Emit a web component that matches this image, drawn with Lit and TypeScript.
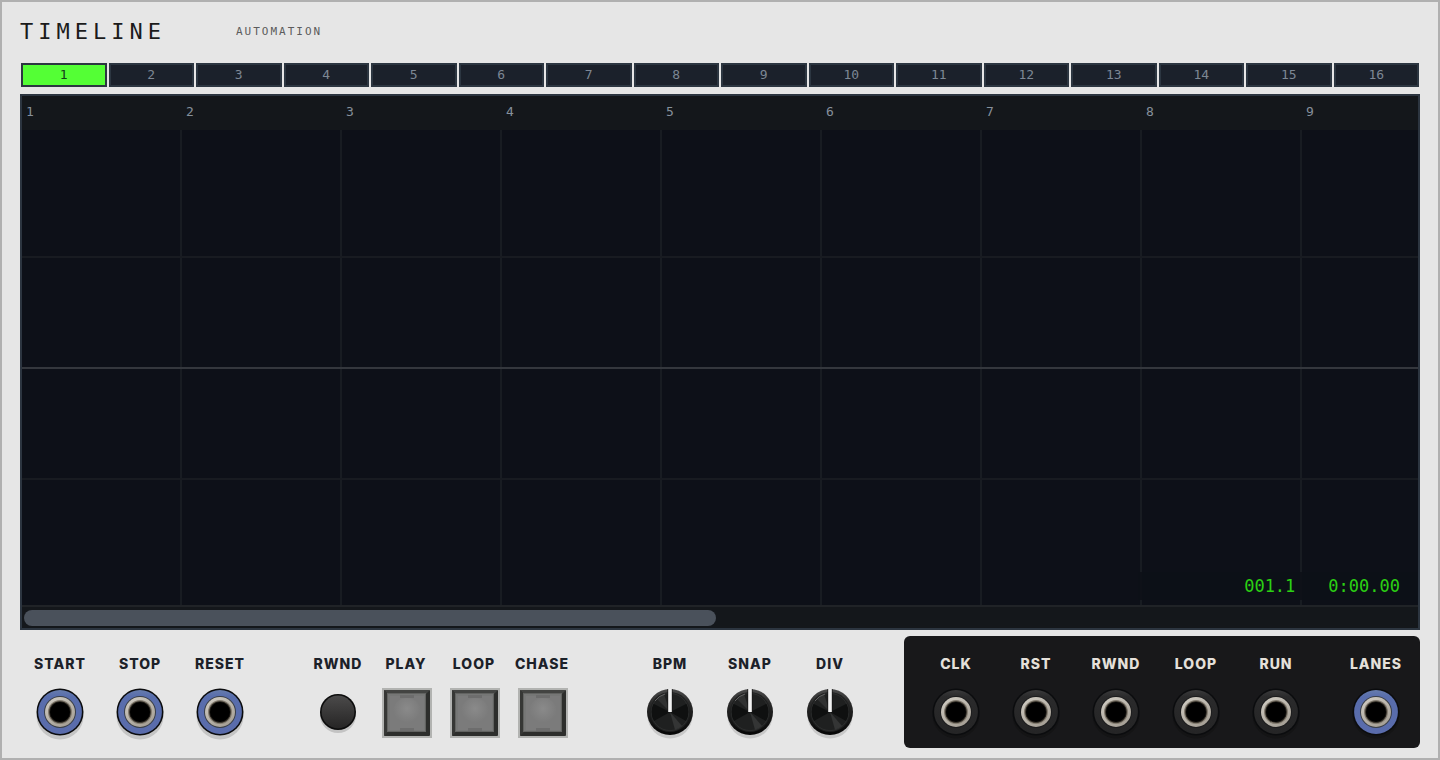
import { LitElement, html, css, svg } from "lit";
import { customElement, property, state } from "lit/decorators.js";

/** Round patch socket, with either a blue (input) or black (output) collar. */
@customElement("patch-jack")
class PatchJack extends LitElement {
  @property() label = "";
  @property() tone = "blue";
  @property({ type: Boolean }) shadow = false;

  static styles = css`
    :host { display: block; width: 50px; height: 50px; }
    svg { display: block; overflow: visible; }
  `;

  render() {
    const blue = this.tone === "blue";
    return html`<svg width="50" height="50" viewBox="0 0 50 50" role="img" aria-label=${this.label + " jack"}>
      <defs>
        <linearGradient id="metal" x1="0" y1="0" x2="0.6" y2="1">
          <stop offset="0" stop-color="#d2cec5"></stop>
          <stop offset="1" stop-color="#a7a197"></stop>
        </linearGradient>
        <linearGradient id="collar" x1="0" y1="0" x2="0" y2="1">
          <stop offset="0" stop-color=${blue ? "#667cad" : "#3a3a3b"}></stop>
          <stop offset="0.15" stop-color=${blue ? "#586dac" : "#2a2a2b"}></stop>
          <stop offset="1" stop-color=${blue ? "#5a6cac" : "#252526"}></stop>
        </linearGradient>
      </defs>
      ${this.shadow
        ? svg`<circle cx="25" cy="29" r="23.5" fill="#c5c5c5"></circle>`
        : svg`<circle cx="25" cy="28" r="23.5" fill="#141415"></circle>`}
      <circle cx="25" cy="25" r="23.5" fill="#0b0c0e"></circle>
      <circle cx="25" cy="25" r="21.9" fill="url(#collar)"></circle>
      <circle cx="25" cy="25" r="16" fill=${blue ? "#3b4048" : "#1d1d1e"}></circle>
      <circle cx="25" cy="25" r="15" fill="url(#metal)"></circle>
      <circle cx="25" cy="25" r="12" fill="#817a6e"></circle>
      <circle cx="25" cy="25" r="10.8" fill="#27231d"></circle>
      <circle cx="25" cy="25" r="10" fill="#000"></circle>
    </svg>`;
  }
}

@customElement("app-root")
class AppRoot extends LitElement {
  @state() private lane = 1;

  static styles = css`
    :host { display: block; }
    * { box-sizing: border-box; }
    button { margin: 0; padding: 0; border: 0; background: none; font: inherit; cursor: pointer; }
    svg { display: block; overflow: visible; }

    .module {
      min-height: 100vh;
      display: flex;
      flex-direction: column;
      padding: 0 18px 10px;
      border: 2px solid #b0b0b0;
      background: #e6e6e6;
      color: #1c2129;
      font-family: "DejaVu Sans Mono", monospace;
    }
    .head { display: flex; align-items: center; gap: 70px; padding: 15px 0 16px; }
    .title {
      margin: 0;
      font-size: 22px;
      line-height: 30px;
      font-weight: 400;
      letter-spacing: 5px;
      color: #1b1b1b;
    }
    .subtitle { font-size: 11px; line-height: 30px; letter-spacing: 2px; color: #5c5c5c; }

    .tabs { display: grid; grid-template-columns: repeat(16, 1fr); gap: 2px; padding: 0 1px; }
    .tab {
      height: 24px;
      border: 2px solid #2c3641;
      background: #1b212b;
      color: #7d8794;
      font-size: 13px;
      line-height: 20px;
      text-align: center;
    }
    .tab.on { background: #54ff35; color: #14401a; }

    .screen {
      position: relative;
      flex: 1;
      display: flex;
      flex-direction: column;
      margin: 7px 0 6px;
      border: 2px solid #2c3540;
      background: #0d1018;
    }
    .ruler {
      display: flex;
      height: 34px;
      overflow: hidden;
      background: #14171b;
      color: #86909b;
      font-size: 13px;
      line-height: 32px;
    }
    .bar { flex: 0 0 160px; padding-left: 4px; }
    .plot {
      flex: 1;
      display: grid;
      grid-template-rows: repeat(4, 1fr);
      padding: 17px 0 14px;
      background: repeating-linear-gradient(90deg, transparent 0 158px, #181c22 158px 160px);
    }
    .rule { border-bottom: 2px solid #181b21; }
    .rule.mid { border-color: #34373d; }
    .rule.end { border: 0; }
    .readout {
      position: absolute;
      right: 0;
      bottom: 28px;
      width: 280px;
      display: flex;
      justify-content: flex-end;
      gap: 33px;
      padding-right: 18px;
      background: #0d1017e0;
      color: #2bd013;
      font-size: 17px;
      line-height: 28px;
    }
    .scroll { height: 23px; padding: 3px 2px 2px; border-top: 2px solid #202327; background: #14171b; }
    .thumb { width: 50%; max-width: 692px; height: 16px; border-radius: 8px; background: #4a515b; }

    .foot { display: flex; }
    .group { display: flex; }
    .transport { margin-left: 44px; }
    .knobs { margin-left: 54px; }
    .outs {
      display: flex;
      margin-left: auto;
      padding: 0 4px 0 12px;
      border-radius: 6px;
      background: #18181a;
      color: #e5e0da;
    }
    .cell {
      position: relative;
      width: 80px;
      display: flex;
      flex-direction: column;
      align-items: center;
      gap: 13px;
      padding: 18px 0 11px;
    }
    .transport .cell { width: 68px; }
    .apart { margin-left: 20px; }
    .name {
      font-family: Inter, sans-serif;
      font-size: 14px;
      line-height: 20px;
      font-weight: 800;
      letter-spacing: 1px;
    }
    .knob { display: grid; }
    .knob > * { grid-area: 1 / 1; }
    .dial { width: 50px; height: 50px; margin: 0; opacity: 0; cursor: pointer; }
  `;

  private push() {
    return html`<svg width="50" height="50" viewBox="0 0 50 50" aria-hidden="true">
      <defs><linearGradient id="cap" x1="0" y1="0" x2="0" y2="1">
        <stop offset="0" stop-color="#4b4a4a"></stop><stop offset="1" stop-color="#262525"></stop>
      </linearGradient></defs>
      <circle cx="25" cy="28" r="18" fill="#c3c3c3"></circle>
      <circle cx="25" cy="25" r="18" fill="#0c0c0c"></circle>
      <circle cx="25" cy="25" r="16.4" fill="url(#cap)"></circle>
    </svg>`;
  }

  private pad() {
    return html`<svg width="50" height="50" viewBox="-1 -1 50 50" aria-hidden="true">
      <defs><radialGradient id="glow" cx="0.5" cy="0.38" r="0.5">
        <stop offset="0" stop-color="#8a8a8a"></stop><stop offset="1" stop-color="#7b7b7b"></stop>
      </radialGradient></defs>
      <rect width="50" height="50" fill="#b2b3b1"></rect>
      <rect x="2" y="2" width="46" height="46" rx="1" fill="#2d2e2c"></rect>
      <path d="M2 2H48L44 6H6Z" fill="#434442"></path>
      <path d="M2 2L6 6V44L2 48Z" fill="#363735"></path>
      <rect x="5" y="5" width="39" height="39" fill="#626361"></rect>
      <rect x="6" y="6" width="37" height="37" fill="#767776"></rect>
      <rect x="8" y="8" width="34" height="34" fill="#7b7b7b"></rect>
      <rect x="18" y="7" width="14" height="3" fill="#6d6d6d"></rect>
      <rect x="18" y="40" width="14" height="3" fill="#6d6d6d"></rect>
      <circle cx="25" cy="24" r="14" fill="url(#glow)"></circle>
    </svg>`;
  }

  private knob() {
    return html`<svg width="50" height="50" viewBox="0 0 50 50" aria-hidden="true">
      <defs><linearGradient id="rim" x1="0" y1="0" x2="0" y2="1">
        <stop offset="0" stop-color="#4c4c4c"></stop>
        <stop offset="0.3" stop-color="#2a2a2a"></stop>
        <stop offset="1" stop-color="#060606"></stop>
      </linearGradient></defs>
      <circle cx="25" cy="29" r="22.5" fill="#c9c9c9"></circle>
      <circle cx="25" cy="25" r="23" fill="url(#rim)"></circle>
      <circle cx="25" cy="25" r="20" fill="#1f2020"></circle>
      <circle cx="25" cy="25" r="18.6" fill="none" stroke="#303131" stroke-width="0.8"></circle>
      <path d="M25 25L8.5 16.8A18.4 18.4 0 0 0 9 34Z" fill="#0f1010"></path>
      <path d="M25 25L41.5 16.8A18.4 18.4 0 0 1 41 34Z" fill="#0f1010"></path>
      <path d="M25 25L12 12A18.4 18.4 0 0 1 19 7.6Z" fill="#303131"></path>
      <path d="M25 25L30 42.7A18.4 18.4 0 0 0 37 39Z" fill="#343535"></path>
      <path d="M10 14A18.6 18.6 0 0 1 20 7" fill="none" stroke="#707070" stroke-width="0.8"></path>
      <rect x="22" y="2" width="6" height="23" fill="#181818" opacity="0.6"></rect>
      <rect x="23.2" y="2" width="3.6" height="23" fill="#f1f1f1"></rect>
    </svg>`;
  }

  private jack(name: string, tone: string, shadow: boolean, extra = "") {
    return html`<div class="cell ${extra}">
      <span class="name">${name}</span>
      <patch-jack label=${name} tone=${tone} ?shadow=${shadow}></patch-jack>
    </div>`;
  }

  render() {
    const lanes = Array.from({ length: 16 }, (_, i) => i + 1);
    return html`<main class="module">
      <header class="head">
        <h1 class="title">TIMELINE</h1>
        <span class="subtitle">AUTOMATION</span>
      </header>
      <nav class="tabs" aria-label="Lanes">
        ${lanes.map((n) => html`<button class="tab ${n === this.lane ? "on" : ""}"
          aria-pressed=${n === this.lane} @click=${() => (this.lane = n)}>${n}</button>`)}
      </nav>
      <section class="screen">
        <div class="ruler">${lanes.slice(0, 9).map((n) => html`<span class="bar">${n}</span>`)}</div>
        <div class="plot">
          <div class="rule"></div><div class="rule mid"></div>
          <div class="rule"></div><div class="rule end"></div>
        </div>
        <div class="scroll"><div class="thumb"></div></div>
        <div class="readout"><span>001.1</span><span>0:00.00</span></div>
      </section>
      <footer class="foot">
        <div class="group">
          ${["START", "STOP", "RESET"].map((n) => this.jack(n, "blue", true))}
        </div>
        <div class="group transport">
          ${["RWND", "PLAY", "LOOP", "CHASE"].map((n) => html`<div class="cell">
            <label class="name" for=${n}>${n}</label>
            <button id=${n}>${n === "RWND" ? this.push() : this.pad()}</button>
          </div>`)}
        </div>
        <div class="group knobs">
          ${["BPM", "SNAP", "DIV"].map((n) => html`<div class="cell">
            <label class="name" for=${n}>${n}</label>
            <div class="knob">${this.knob()}<input class="dial" id=${n} type="range"></div>
          </div>`)}
        </div>
        <div class="outs">
          ${["CLK", "RST", "RWND", "LOOP", "RUN"].map((n) => this.jack(n, "black", false))}
          ${this.jack("LANES", "blue", false, "apart")}
        </div>
      </footer>
    </main>`;
  }
}
